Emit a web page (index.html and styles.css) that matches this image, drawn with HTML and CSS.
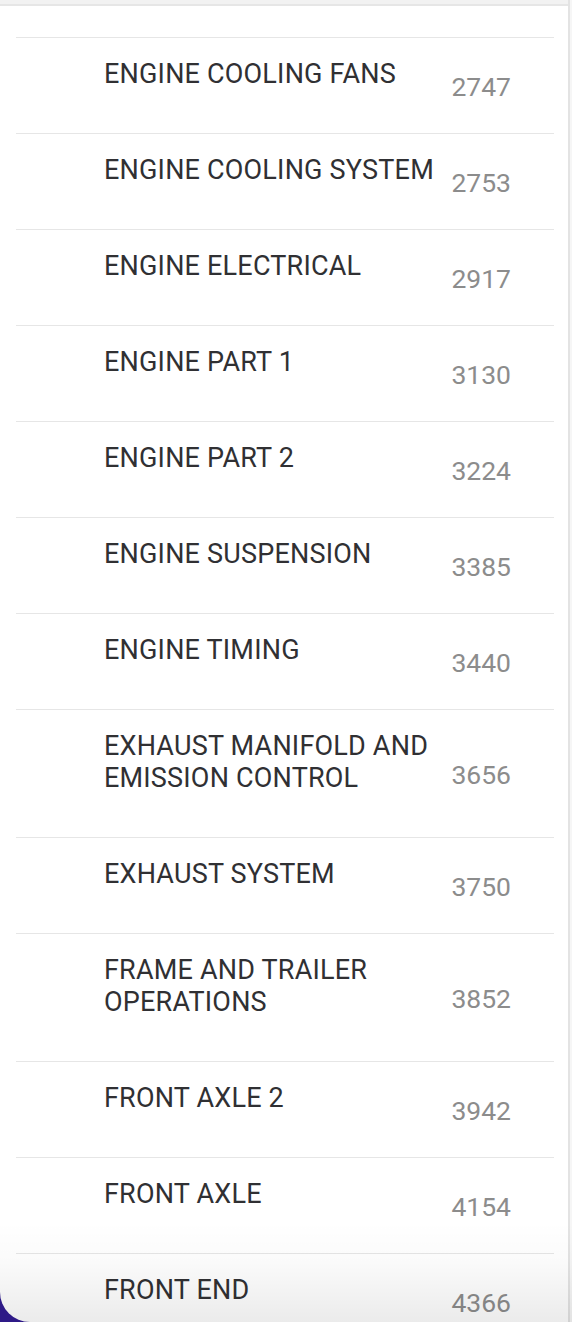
FILE: index.html
```html
<!DOCTYPE html>
<html lang="en">
<head>
<meta charset="utf-8">
<title>Sections</title>
<link rel="stylesheet" href="styles.css">
</head>
<body>
<div class="panel">
  <div class="list">
    <div class="topbar"></div>
    <ul class="rows">
      <li class="row"><span class="name">ENGINE COOLING FANS</span><span class="num">2747</span></li>
      <li class="row"><span class="name">ENGINE COOLING SYSTEM</span><span class="num">2753</span></li>
      <li class="row"><span class="name">ENGINE ELECTRICAL</span><span class="num">2917</span></li>
      <li class="row"><span class="name">ENGINE PART 1</span><span class="num">3130</span></li>
      <li class="row"><span class="name">ENGINE PART 2</span><span class="num">3224</span></li>
      <li class="row"><span class="name">ENGINE SUSPENSION</span><span class="num">3385</span></li>
      <li class="row"><span class="name">ENGINE TIMING</span><span class="num">3440</span></li>
      <li class="row"><span class="name">EXHAUST MANIFOLD AND EMISSION CONTROL</span><span class="num">3656</span></li>
      <li class="row"><span class="name">EXHAUST SYSTEM</span><span class="num">3750</span></li>
      <li class="row"><span class="name">FRAME AND TRAILER OPERATIONS</span><span class="num">3852</span></li>
      <li class="row"><span class="name">FRONT AXLE 2</span><span class="num">3942</span></li>
      <li class="row"><span class="name">FRONT AXLE</span><span class="num">4154</span></li>
      <li class="row"><span class="name">FRONT END</span><span class="num">4366</span></li>
    </ul>
  </div>
  <div class="track"></div>
  <div class="shade"></div>
</div>
</body>
</html>
```
FILE: styles.css
```css
html, body {
  margin: 0;
  padding: 0;
}
body {
  background: #2e1a87;
  font-family: Roboto, "Liberation Sans", sans-serif;
}
.panel {
  position: relative;
  display: flex;
  width: 572px;
  height: 1322px;
  background: #ffffff;
  border-bottom-left-radius: 30px;
  overflow: hidden;
}
.list {
  flex: 1;
  min-width: 0;
}
.topbar {
  height: 4px;
  background: #f2f2f2;
  border-bottom: 2px solid #e6e6e6;
}
.rows {
  list-style: none;
  margin: 0;
  padding: 31px 14px 0 16px;
}
.row {
  display: flex;
  align-items: center;
  border-top: 1px solid #e6e6e6;
  padding: 0 43px 0 88px;
}
.name {
  flex: 1;
  min-width: 0;
  padding: 20px 0 43px;
  font-size: 27px;
  line-height: 32px;
  letter-spacing: 0.2px;
  color: #303033;
}
.num {
  width: 70px;
  margin-top: 3px;
  text-align: right;
  font-size: 26.5px;
  line-height: 32px;
  color: #8c8c8c;
}
.track {
  width: 4px;
  background: linear-gradient(to right, #e3e3e3 0, #e3e3e3 2px, #f6f6f6 2px);
}
.shade {
  position: absolute;
  left: 0;
  right: 0;
  bottom: 0;
  height: 100px;
  background: linear-gradient(to bottom, rgba(0, 0, 0, 0), rgba(0, 0, 0, 0.02) 40%, rgba(0, 0, 0, 0.08));
  pointer-events: none;
}
```
